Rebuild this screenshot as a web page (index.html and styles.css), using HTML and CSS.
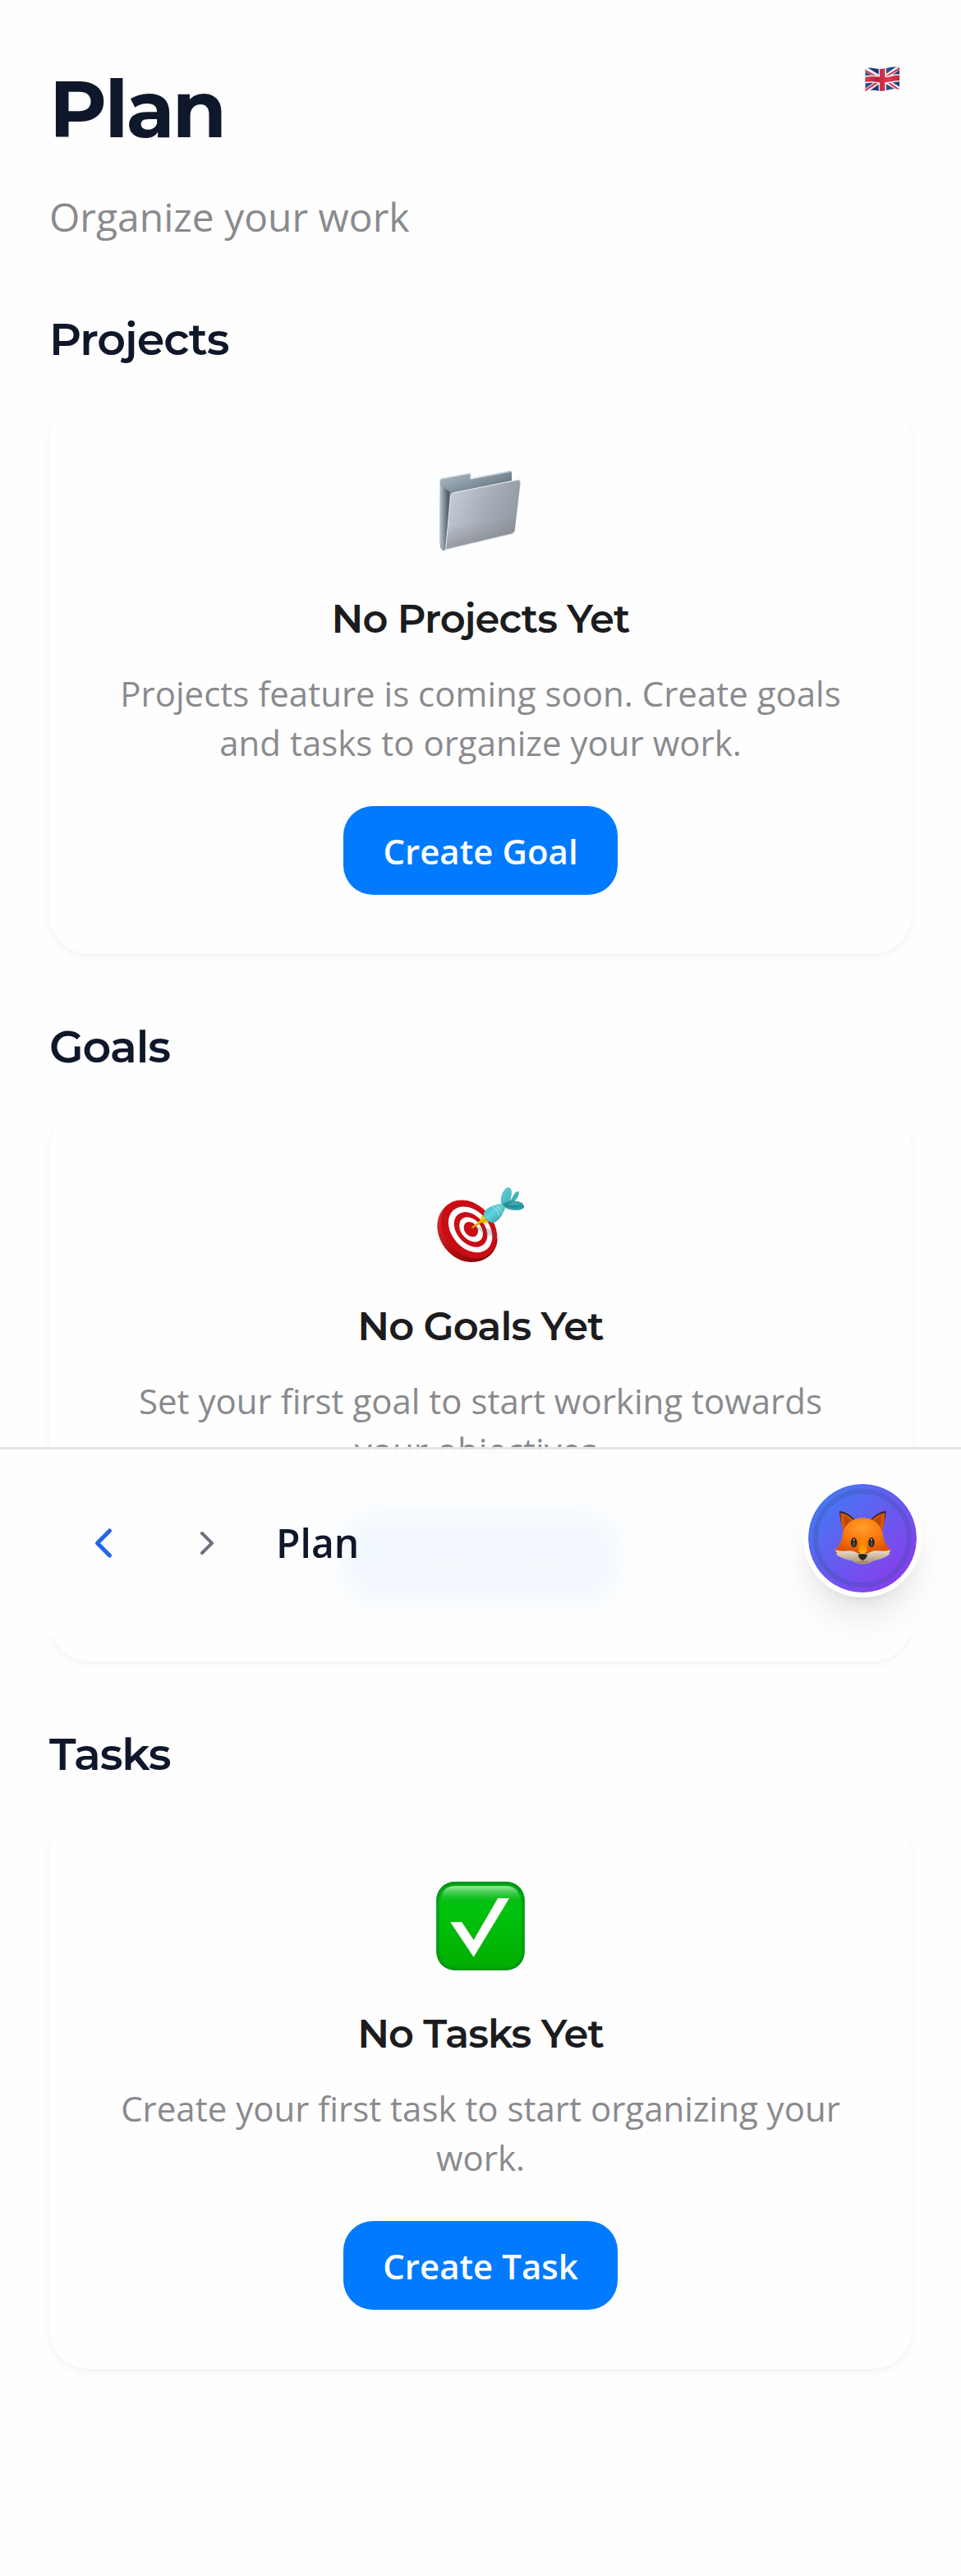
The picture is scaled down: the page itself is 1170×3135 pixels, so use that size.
FILE: index.html
```html
<!DOCTYPE html>
<html lang="en">
<head>
<meta charset="utf-8">
<title>Plan</title>
<link rel="stylesheet" href="styles.css">
</head>
<body>
<main class="page">
  <header class="header">
    <div>
      <h1 class="title">Plan</h1>
      <p class="subtitle">Organize your work</p>
    </div>
    <button class="flag" aria-label="Language">
      <svg viewBox="68 62 129 92">
        <defs>
          <clipPath id="flagShape"><path d="M69 70Q84 65 100 68Q125 74 150 67Q175 61 195 64V145Q178 141 155 147Q130 154 108 149Q88 147 69 152Z"/></clipPath>
          <linearGradient id="flagShade"><stop offset="0" stop-color="#fff" stop-opacity=".1"/><stop offset=".35" stop-color="#000" stop-opacity=".12"/><stop offset=".65" stop-color="#fff" stop-opacity=".12"/><stop offset="1" stop-color="#000" stop-opacity=".08"/></linearGradient>
        </defs>
        <g clip-path="url(#flagShape)">
          <path fill="#173a83" d="M68 60h130v95H68z"/>
          <path stroke="#fff" stroke-width="16" d="M66 69L198 147M198 62L66 154"/>
          <path stroke="#d9243f" stroke-width="6" d="M66 74L125 108M139 110L198 151M198 67L139 102M125 112L66 151"/>
          <path fill="none" stroke="#fff" stroke-width="28" d="M132 60V155M66 110Q90 105 115 109T165 107T200 105"/>
          <path fill="none" stroke="#d9243f" stroke-width="19" d="M132 60V155M66 110Q90 105 115 109T165 107T200 105"/>
          <path fill="url(#flagShade)" d="M68 60h130v95H68z"/>
        </g>
      </svg>
    </button>
  </header>

  <section class="section">
    <h2 class="heading">Projects</h2>
    <div class="card">
      <svg class="icon" viewBox="63 54 324 324">
        <defs>
          <linearGradient id="folderBack" x1="0" y1="0" x2=".35" y2="1"><stop offset="0" stop-color="#b6c3cc"/><stop offset=".45" stop-color="#667784"/><stop offset="1" stop-color="#43525f"/></linearGradient>
          <linearGradient id="folderEdge"><stop offset="0" stop-color="#b4c0c9"/><stop offset="1" stop-color="#3e4c59"/></linearGradient>
          <linearGradient id="folderFront" x1="0" y1=".1" x2="1" y2=".5"><stop offset="0" stop-color="#cbd2dc"/><stop offset=".5" stop-color="#abb1bb"/><stop offset="1" stop-color="#8f979f"/></linearGradient>
          <linearGradient id="folderFloor" x1="0" y1="0" x2=".15" y2="1"><stop offset=".65" stop-color="#888b93" stop-opacity="0"/><stop offset="1" stop-color="#85888f" stop-opacity=".75"/></linearGradient>
        </defs>
        <path fill="url(#folderBack)" d="M77 103Q77 98 83 96L184 77Q190 76 190 82V97L333 69Q339 69 339 76V180L100 355Q90 364 82 354Q77 348 77 335Z"/>
        <path fill="url(#folderEdge)" d="M78 120L112 145L98 355Q88 362 82 354Q78 347 78 335Z"/>
        <path fill="none" stroke="#dcebf3" stroke-width="3" d="M79 103Q80 99 85 97L183 79Q189 78 189 85V99L337 71"/>
        <path fill="url(#folderFront)" d="M117 160Q118 152 127 149L361 101Q371 100 371 110L350 288Q349 296 341 299L98 357Z"/>
        <path fill="url(#folderFloor)" d="M117 160Q118 152 127 149L361 101Q371 100 371 110L350 288Q349 296 341 299L98 357Z"/>
        <path fill="none" stroke="#edf3f8" stroke-width="3" d="M98 357L116 160Q118 152 127 149L361 102Q371 100 370 112"/>
        <path fill="none" stroke="#dfe3e6" stroke-width="3" d="M99 356L340 299Q347 296 349 290"/>
      </svg>
      <h3 class="card-title">No Projects Yet</h3>
      <p class="text">Projects feature is coming soon. Create goals and tasks to organize your work.</p>
      <button class="button">Create Goal</button>
    </div>
  </section>

  <section class="section">
    <h2 class="heading">Goals</h2>
    <div class="card">
      <svg class="icon" viewBox="63 27 324 324">
        <defs>
          <linearGradient id="dartBody" x1="0" y1="0" x2="1" y2="1"><stop offset="0" stop-color="#35aebb"/><stop offset=".45" stop-color="#65d3dc"/><stop offset="1" stop-color="#238b98"/></linearGradient>
          <linearGradient id="dartFin" x1="0" y1="0" x2="1" y2="1"><stop offset="0" stop-color="#68d4dd"/><stop offset="1" stop-color="#238f9b"/></linearGradient>
          <linearGradient id="targetSide" x1="0" y1="0" x2="1" y2="1"><stop offset="0" stop-color="#e23a3d"/><stop offset=".5" stop-color="#b80c12"/><stop offset="1" stop-color="#700407"/></linearGradient>
        </defs>
        <path fill="url(#targetSide)" d="M153 124C105 123 65 165 67 220C70 287 127 348 192 348C246 348 285 312 287 263Z"/>
        <g transform="rotate(49 183 228)">
          <ellipse cx="183" cy="228" rx="118" ry="90" fill="#c90d15"/>
          <ellipse cx="187" cy="225" rx="94" ry="68" fill="#fff"/>
          <ellipse cx="188" cy="224" rx="72" ry="51" fill="#c90d15"/>
          <ellipse cx="189" cy="223" rx="51" ry="36" fill="#fff"/>
          <ellipse cx="188" cy="223" rx="30" ry="23" fill="#c90d15"/>
        </g>
        <path fill="#555" opacity=".24" d="M196 222L232 219L275 232Q287 242 281 260L235 240Z"/>
        <path fill="#efc900" d="M229 180L240 178L241 190L255 202L240 207L229 204L196 225L192 221L224 196Z"/>
        <path fill="none" stroke="#8c6800" stroke-width="2" d="M195 223L246 192"/>
        <path fill="url(#dartFin)" d="M302 137C294 108 310 76 328 75C344 78 340 104 332 126L352 94Q364 87 366 92Q366 109 350 125C367 124 383 132 385 146C379 161 340 163 315 149Z"/>
        <path fill="#197984" opacity=".65" d="M302 137L330 125L351 123L325 139L383 144L341 149L315 148Z"/>
        <path fill="url(#dartBody)" d="M236 180C234 157 262 140 299 135Q313 139 315 151C303 183 285 207 265 204Q249 199 236 180Z"/>
        <path fill="none" stroke="#8ce7ec" stroke-width="4" opacity=".8" d="M269 146Q289 157 293 179M281 142Q300 152 303 169"/>
      </svg>
      <h3 class="card-title">No Goals Yet</h3>
      <p class="text">Set your first goal to start working towards your objectives.</p>
      <button class="button">Create Goal</button>
    </div>
  </section>

  <section class="section">
    <h2 class="heading">Tasks</h2>
    <div class="card">
      <svg class="icon" viewBox="63 60 324 324">
        <defs>
          <linearGradient id="checkFill" x1="0" y1="0" x2="0" y2="1"><stop offset="0" stop-color="#00a817"/><stop offset=".3" stop-color="#00c40d"/><stop offset="1" stop-color="#00ad00"/></linearGradient>
          <linearGradient id="checkGloss" x1="0" y1="0" x2="0" y2="1"><stop offset="0" stop-color="#9ce8a3"/><stop offset="1" stop-color="#00c40d" stop-opacity="0"/></linearGradient>
          <filter id="soften"><feGaussianBlur stdDeviation="4"/></filter>
          <clipPath id="checkClip"><rect x="64" y="60" width="322" height="323" rx="67"/></clipPath>
        </defs>
        <rect x="64" y="60" width="322" height="323" rx="67" fill="url(#checkFill)"/>
        <g clip-path="url(#checkClip)"><rect x="64" y="60" width="322" height="323" rx="67" fill="none" stroke="#008b16" stroke-width="13" filter="url(#soften)"/></g>
        <path fill="url(#checkGloss)" d="M81 145V128Q83 77 132 76H318Q367 77 369 128V145Z"/>
        <path fill="#fff" stroke="#087b18" stroke-opacity=".4" stroke-width="2" d="M114 207H157L200 272L288 120H331L200 336Z"/>
      </svg>
      <h3 class="card-title">No Tasks Yet</h3>
      <p class="text">Create your first task to start organizing your work.</p>
      <button class="button">Create Task</button>
    </div>
  </section>
</main>

<nav class="bar">
  <button class="nav-button back" aria-label="Back"><svg viewBox="0 0 24 24"><path d="M15 18l-6-6 6-6"/></svg></button>
  <button class="nav-button next" aria-label="Forward"><svg viewBox="0 0 24 24"><path d="M9 18l6-6-6-6"/></svg></button>
  <span class="bar-title">Plan</span>
  <button class="avatar" aria-label="Assistant">
    <svg viewBox="162 168 216 216">
      <defs>
        <radialGradient id="foxFace" cx=".5" cy=".25" r=".65"><stop offset="0" stop-color="#ffa02c"/><stop offset=".55" stop-color="#f9780c"/><stop offset="1" stop-color="#dc5203"/></radialGradient>
        <linearGradient id="foxMuzzle" x1="0" y1="0" x2="0" y2="1"><stop offset="0" stop-color="#eee0cb"/><stop offset="1" stop-color="#a58c72"/></linearGradient>
        <linearGradient id="foxNose" x1="0" y1="0" x2="0" y2="1"><stop offset="0" stop-color="#f98b0b" stop-opacity="0"/><stop offset="1" stop-color="#ffb800"/></linearGradient>
      </defs>
      <path fill="#292524" d="M186 177Q218 181 241 207L204 250Q187 214 186 177ZM356 177Q324 181 301 207L338 250Q355 214 356 177Z"/>
      <path fill="#d85508" d="M190 183Q221 190 239 211L202 253Q190 224 190 183ZM352 183Q321 190 303 211L340 253Q352 224 352 183Z"/>
      <path fill="#b84a0c" d="M202 196Q219 197 229 214L207 236ZM340 196Q323 197 313 214L335 236Z"/>
      <path fill="url(#foxFace)" d="M271 202C313 202 342 230 347 272C350 292 361 306 373 319L364 322L371 331Q329 345 271 345Q213 345 172 331L179 322L169 319C183 305 193 292 196 271C200 230 229 202 271 202Z"/>
      <path fill="url(#foxMuzzle)" d="M169 319Q188 326 217 322Q241 321 256 334L271 328L287 334Q302 321 327 322Q355 326 374 319L366 331L371 333Q350 352 308 359Q293 371 271 371Q249 371 234 359Q192 352 172 334L179 331Z"/>
      <path fill="url(#foxNose)" d="M262 260H280L287 324Q271 340 256 324Z"/>
      <ellipse cx="239" cy="292" rx="11" ry="18" fill="#241b19"/><ellipse cx="303" cy="292" rx="11" ry="18" fill="#241b19"/>
      <ellipse cx="239" cy="296" rx="5" ry="11" fill="#474a4c"/><ellipse cx="303" cy="296" rx="5" ry="11" fill="#474a4c"/>
      <circle cx="239" cy="281" r="3" fill="#d8dde0"/><circle cx="303" cy="281" r="3" fill="#d8dde0"/>
      <path fill="#2b2727" d="M254 339Q256 333 271 333Q287 333 288 339Q284 353 271 357Q259 353 254 339Z"/>
      <path fill="none" stroke="#7a604c" stroke-width="2" d="M271 356V361Q262 366 251 362M271 361Q280 366 291 362"/>
    </svg>
  </button>
</nav>
</body>
</html>
```
FILE: styles.css
```css
* { box-sizing: border-box; }
body {
  margin: 0;
  position: relative;
  height: 3135px;
  background: #fefefe;
  font-family: "Open Sans", "Noto Sans", sans-serif;
}
button { border: 0; padding: 0; background: none; font: inherit; }
svg { display: block; overflow: visible; }
h1, h2, h3, p { margin: 0; }

.page { padding: 73px 60px 0; }
.header { display: flex; justify-content: space-between; align-items: flex-start; }
.title, .heading, .card-title { font-family: Montserrat, Inter, sans-serif; }
.title { font-size: 96px; line-height: 120px; font-weight: 700; color: #0f172a; letter-spacing: -.03em; }
.subtitle { margin-top: 35px; font-size: 48px; line-height: 72px; color: #8a8a8e; }
.flag { width: 43px; height: 31px; margin: 8px 14px 0 0; }

.section { margin-top: 80px; }
.heading { font-size: 54px; line-height: 66px; font-weight: 600; color: #0f172a; letter-spacing: -.02em; }
.card {
  display: flex;
  flex-direction: column;
  align-items: center;
  height: 672px;
  margin-top: 43px;
  padding: 79px 72px 72px;
  border-radius: 48px;
  background: #fefefe;
  box-shadow: 0 3px 9px rgba(0, 0, 0, .05);
  text-align: center;
}
.icon { width: 108px; height: 108px; flex: none; }
.card-title { margin-top: 47px; font-size: 48px; line-height: 60px; font-weight: 600; color: #1c1c1e; letter-spacing: -.02em; }
.text { margin-top: 31px; font-size: 42px; line-height: 60px; color: #8a8a8e; }
.button {
  height: 108px;
  margin-top: 47px;
  padding: 0 48px;
  border-radius: 36px;
  background: #007aff;
  color: #fff;
  font-size: 42px;
  font-weight: 600;
}

.bar {
  position: absolute;
  top: 1761px;
  left: 0;
  right: 0;
  height: 231px;
  display: flex;
  align-items: center;
  padding: 0 48px 0 72px;
  border-top: 3px solid #e5e5ea;
  background: rgba(254, 254, 254, .95);
  backdrop-filter: blur(18px);
}
.nav-button { display: grid; place-items: center; width: 108px; height: 108px; margin-right: 18px; }
.nav-button svg { fill: none; stroke: currentColor; stroke-width: 2; stroke-linecap: round; stroke-linejoin: round; }
.back { color: #2563eb; }
.back svg { width: 60px; height: 60px; }
.next { color: #6b7280; }
.next svg { width: 48px; height: 48px; }
.bar-title { margin: -1px 0 0 12px; font-size: 48px; font-weight: 600; color: #0f172a; }
.avatar {
  display: grid;
  place-items: center;
  position: relative;
  width: 144px;
  height: 144px;
  margin: -12px 0 0 auto;
  border: 6px solid #fff;
  border-radius: 50%;
  background: linear-gradient(135deg, #3b82f6, #9333ea) padding-box;
  box-shadow: 0 30px 45px -9px rgba(0, 0, 0, .1), 0 12px 18px -12px rgba(0, 0, 0, .1);
}
.avatar::before {
  content: "";
  position: absolute;
  inset: 6px;
  border: 6px solid rgba(55, 80, 150, .28);
  border-radius: 50%;
}
.avatar svg { width: 72px; height: 72px; }
```
